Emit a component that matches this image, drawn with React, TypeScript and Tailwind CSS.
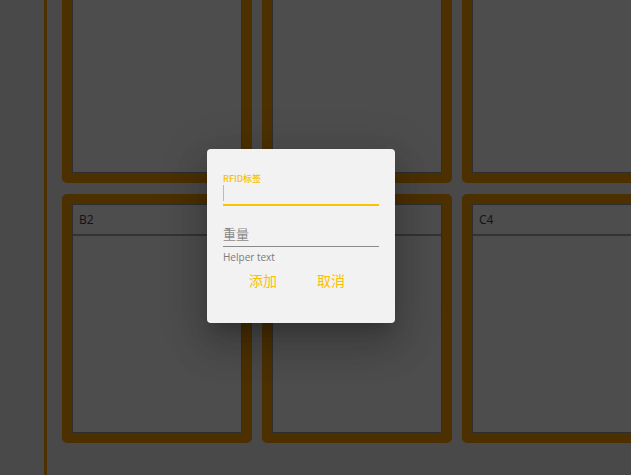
const cards = ['', '', '', 'B2', 'C2', 'C4'];

function Card({ id }: { id: string }) {
  return (
    <div className="h-[249px] w-[190px] rounded-[5px] border-[10px] border-[#4c3000] bg-[#4c3000]">
      <div className="flex h-full flex-col border border-[#2e2e2e] bg-[#4d4d4d]">
        <div className="flex h-[31px] items-center border-b-2 border-[#333333] pl-[6px] text-[12px] text-[#151515]">
          {id}
        </div>
      </div>
    </div>
  );
}

export default function App() {
  return (
    <div className="relative h-[475px] w-[631px] overflow-hidden bg-[#494949] font-['Noto_Sans','Noto_Sans_CJK_SC',sans-serif]">
      <div className="flex h-full items-start pl-[44px]">
        <div className="h-full w-[3px] shrink-0 bg-[#4c3000]" />
        <div className="ml-[15px] mt-[-66px] grid shrink-0 grid-cols-[190px_190px_190px] grid-rows-[249px_249px] gap-x-[10px] gap-y-[11px]">
          {cards.map((c, i) => (
            <Card key={i} id={c} />
          ))}
        </div>
      </div>

      <div className="absolute left-[207px] top-[149px] h-[174px] w-[188px] rounded-[4px] bg-[#f2f2f2] px-[16px] pt-[24px] shadow-[0_11px_15px_-7px_rgba(0,0,0,0.2),0_24px_38px_3px_rgba(0,0,0,0.14),0_9px_46px_8px_rgba(0,0,0,0.12)]">
        <div className="text-[9px] font-medium leading-[12px] text-[#f7c100] font-['Noto_Sans_CJK_SC',sans-serif]">RFID标签</div>
        <div className="flex h-[21px] items-end border-b-2 border-[#fcc300] pb-[3px]">
          <div className="h-[16px] w-[1px] bg-[#f7c100]" />
        </div>
        <div className="mt-[20px] h-[21px] border-b border-[#8a8a8a] text-[13px] leading-[16px] text-[#8a8a8a] font-['Noto_Sans_CJK_SC',sans-serif]">
          重量
        </div>
        <div className="mt-[3px] text-[10px] leading-[14px] text-[#7a7a7a] font-['Open_Sans',sans-serif]">Helper text</div>
        <div className="mt-[9px] flex gap-[40px] pl-[26px] text-[14px] leading-[14px] text-[#f7c100] font-['Noto_Sans_CJK_SC',sans-serif]">
          <span>添加</span>
          <span>取消</span>
        </div>
      </div>
    </div>
  );
}
